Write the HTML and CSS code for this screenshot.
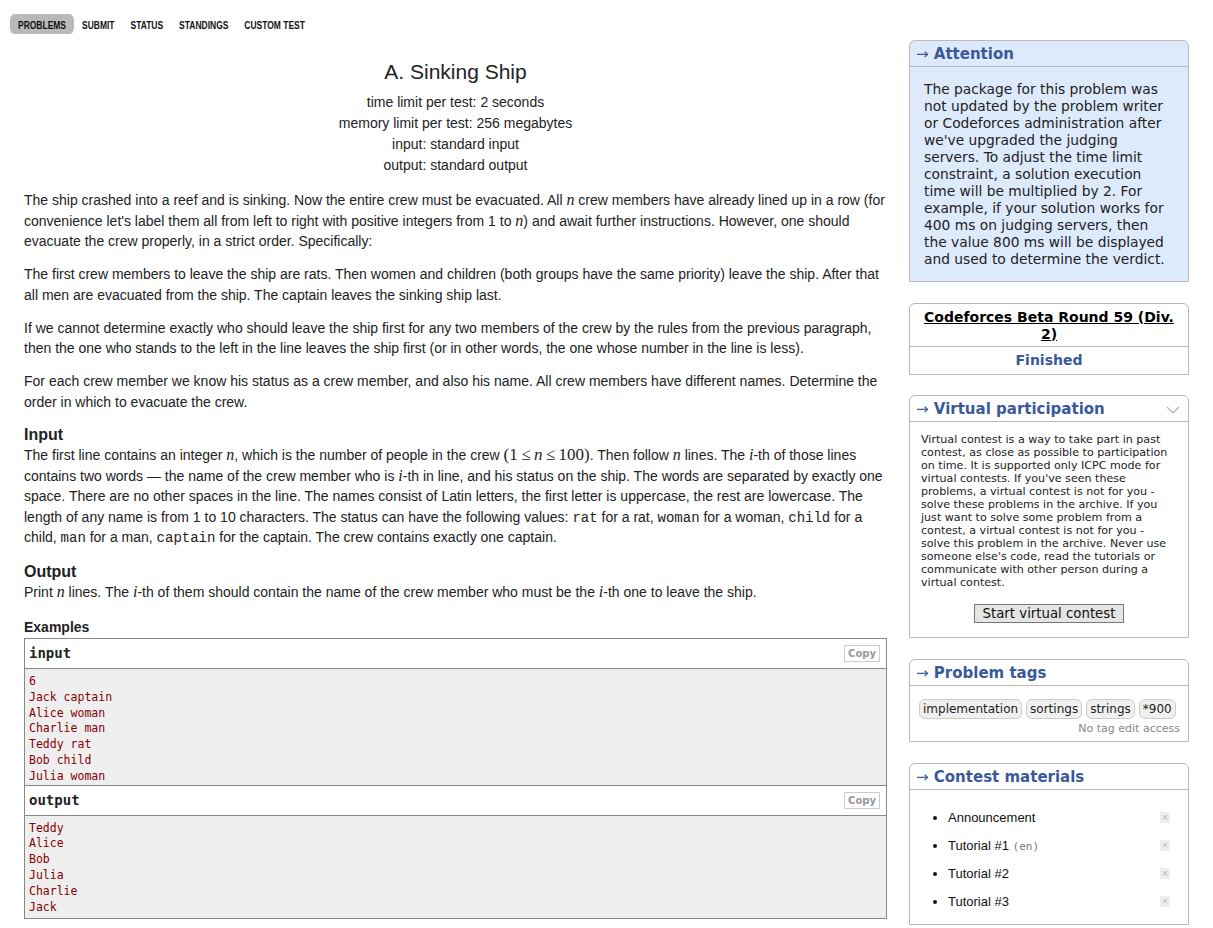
FILE: index.html
```html
<!DOCTYPE html>
<html>
<head>
<meta charset="utf-8">
<link rel="stylesheet" href="styles.css">
</head>
<body>
<div class="page">
  <div class="left">
    <nav class="menu">
      <a class="menu-item active">PROBLEMS</a>
      <a class="menu-item">SUBMIT</a>
      <a class="menu-item">STATUS</a>
      <a class="menu-item">STANDINGS</a>
      <a class="menu-item">CUSTOM TEST</a>
    </nav>
    <div class="problem">
      <div class="header">
        <div class="title">A. Sinking Ship</div>
        <div class="hline">time limit per test: 2 seconds</div>
        <div class="hline">memory limit per test: 256 megabytes</div>
        <div class="hline">input: standard input</div>
        <div class="hline">output: standard output</div>
      </div>
      <p>The ship crashed into a reef and is sinking. Now the entire crew must be evacuated. All <span class="m">n</span> crew members have already lined up in a row (for convenience let's label them all from left to right with positive integers from 1 to <span class="m">n</span>) and await further instructions. However, one should evacuate the crew properly, in a strict order. Specifically:</p>
      <p>The first crew members to leave the ship are rats. Then women and children (both groups have the same priority) leave the ship. After that all men are evacuated from the ship. The captain leaves the sinking ship last.</p>
      <p>If we cannot determine exactly who should leave the ship first for any two members of the crew by the rules from the previous paragraph, then the one who stands to the left in the line leaves the ship first (or in other words, the one whose number in the line is less).</p>
      <p>For each crew member we know his status as a crew member, and also his name. All crew members have different names. Determine the order in which to evacuate the crew.</p>
      <div class="section input-spec">
        <div class="section-title">Input</div>
        <p class="first">The first line contains an integer <span class="m">n</span>, which is the number of people in the crew <span class="mr">(1&thinsp;≤&thinsp;<i>n</i>&thinsp;≤&thinsp;100)</span>. Then follow <span class="m">n</span> lines. The <span class="m">i</span>-th of those lines contains two words — the name of the crew member who is <span class="m">i</span>-th in line, and his status on the ship. The words are separated by exactly one space. There are no other spaces in the line. The names consist of Latin letters, the first letter is uppercase, the rest are lowercase. The length of any name is from 1 to 10 characters. The status can have the following values: <code>rat</code> for a rat, <code>woman</code> for a woman, <code>child</code> for a child, <code>man</code> for a man, <code>captain</code> for the captain. The crew contains exactly one captain.</p>
      </div>
      <div class="section">
        <div class="section-title">Output</div>
        <p class="first">Print <span class="m">n</span> lines. The <span class="m">i</span>-th of them should contain the name of the crew member who must be the <span class="m">i</span>-th one to leave the ship.</p>
      </div>
      <div class="examples">
        <div class="ex-title">Examples</div>
        <div class="sample">
          <div class="io-head"><span>input</span><span class="copy">Copy</span></div>
          <pre class="io-body">6
Jack captain
Alice woman
Charlie man
Teddy rat
Bob child
Julia woman</pre>
          <div class="io-head"><span>output</span><span class="copy">Copy</span></div>
          <pre class="io-body">Teddy
Alice
Bob
Julia
Charlie
Jack</pre>
        </div>
      </div>
    </div>
  </div>

  <aside class="sidebar">
    <div class="box attention">
      <div class="box-title"><span class="arrow">→</span> Attention</div>
      <div class="attention-text">The package for this problem was not updated by the problem writer or Codeforces administration after we've upgraded the judging servers. To adjust the time limit constraint, a solution execution time will be multiplied by 2. For example, if your solution works for 400 ms on judging servers, then the value 800 ms will be displayed and used to determine the verdict.</div>
    </div>

    <div class="box contest">
      <div class="contest-name"><a>Codeforces Beta Round 59 (Div. 2)</a></div>
      <div class="contest-phase">Finished</div>
    </div>

    <div class="box virtual">
      <div class="box-title with-toggle"><span><span class="arrow">→</span> Virtual participation</span>
        <svg class="chev" width="14" height="8" viewBox="0 0 14 8"><path d="M1 1 L7 7 L13 1" fill="none" stroke="#aab0bb" stroke-width="1.2"/></svg>
      </div>
      <div class="virtual-text">Virtual contest is a way to take part in past contest, as close as possible to participation on time. It is supported only ICPC mode for virtual contests. If you've seen these problems, a virtual contest is not for you - solve these problems in the archive. If you just want to solve some problem from a contest, a virtual contest is not for you - solve this problem in the archive. Never use someone else's code, read the tutorials or communicate with other person during a virtual contest.</div>
      <div class="btn-row"><button class="vbtn">Start virtual contest</button></div>
    </div>

    <div class="box">
      <div class="box-title"><span class="arrow">→</span> Problem tags</div>
      <div class="tags">
        <span class="tag">implementation</span>
        <span class="tag">sortings</span>
        <span class="tag">strings</span>
        <span class="tag">*900</span>
      </div>
      <div class="no-edit">No tag edit access</div>
    </div>

    <div class="box">
      <div class="box-title"><span class="arrow">→</span> Contest materials</div>
      <ul class="materials">
        <li><span>Announcement</span><span class="x">×</span></li>
        <li><span>Tutorial #1 <span class="lang">(en)</span></span><span class="x">×</span></li>
        <li><span>Tutorial #2</span><span class="x">×</span></li>
        <li><span>Tutorial #3</span><span class="x">×</span></li>
      </ul>
    </div>
  </aside>
</div>
</body>
</html>
```

FILE: styles.css
```css
html, body {
  margin: 0;
  padding: 0;
  background: #fff;
}
body {
  font-family: "Liberation Sans", Arial, sans-serif;
  color: #222;
}
.page {
  display: flex;
  align-items: flex-start;
  width: 1213px;
}
.left {
  width: 887px;
}
.menu {
  display: flex;
  margin: 14px 0 0 10px;
  height: 20px;
  transform: scaleX(0.77);
  transform-origin: left center;
}
.menu-item {
  font-family: "Liberation Sans", Arial, sans-serif;
  font-weight: bold;
  font-size: 11px;
  line-height: 18px;
  padding: 2px 10.4px 0;
  color: #111;
  border-radius: 6px;
}
.menu-item.active {
  background: #b9b9b9;
}
.problem {
  margin-left: 24px;
  width: 863px;
  font-size: 14px;
  line-height: 20.5px;
}
.header {
  text-align: center;
  margin-top: 24px;
  margin-bottom: 14px;
}
.title {
  font-size: 21px;
  line-height: 28px;
  margin-bottom: 6px;
}
.hline {
  line-height: 21px;
}
p {
  margin: 0 0 12.5px 0;
}
.m {
  font-family: "Liberation Serif", serif;
  font-style: italic;
  font-size: 16px;
  line-height: 1;
}
.mr {
  font-family: "Liberation Serif", serif;
  font-size: 17px;
  line-height: 1;
}
code {
  font-family: "Liberation Mono", monospace;
  font-size: 14px;
  line-height: 1;
}
.section {
  margin-top: 14px;
}
.section.input-spec {
  margin-top: 13px;
}
.section-title {
  font-weight: bold;
  font-size: 16px;
  line-height: 20px;
}
.section p.first {
  margin-bottom: 8px;
}
.examples {
  margin-top: 16px;
}
.ex-title {
  font-weight: bold;
  font-size: 14px;
  line-height: 18px;
  margin-bottom: 2px;
}
.sample {
  border: 1px solid #888;
}
.io-head {
  display: flex;
  justify-content: space-between;
  align-items: center;
  height: 29px;
  padding: 0 6px 0 4px;
  font-family: "DejaVu Sans Mono", monospace;
  font-weight: bold;
  font-size: 14px;
  color: #222;
  border-bottom: 1px solid #888;
  background: #fff;
}
.io-body + .io-head {
  border-top: 1px solid #888;
}
.copy {
  font-family: "DejaVu Sans", sans-serif;
  font-weight: bold;
  font-size: 10px;
  color: #999;
  border: 1px solid #ccc;
  padding: 1px 3px;
  line-height: 13px;
}
.io-body {
  margin: 0;
  background: #efefef;
  font-family: "DejaVu Sans Mono", monospace;
  font-size: 11.5px;
  line-height: 15.8px;
  color: #800;
  padding: 5px 4px 0 4px;
}
.io-body:last-child {
  padding-bottom: 3px;
}

/* Sidebar */
.sidebar {
  width: 280px;
  margin-left: 22px;
  margin-top: 40px;
  display: flex;
  flex-direction: column;
  gap: 21px;
  font-family: "DejaVu Sans", Verdana, sans-serif;
}
.box {
  border: 1px solid #b9b9b9;
  border-radius: 6px 6px 0 0;
  background: #fff;
}
.box-title {
  font-weight: bold;
  font-size: 15px;
  line-height: 23px;
  padding: 2px 6px 0;
  color: #3b5998;
  border-bottom: 1px solid #b9b9b9;
}
.arrow {
  font-weight: normal;
  color: #3b5998;
}
.with-toggle {
  display: flex;
  justify-content: space-between;
  align-items: center;
}
.chev {
  margin-right: 2px;
}
.attention {
  background: #ddeafb;
}
.attention-text {
  font-size: 13.8px;
  line-height: 17px;
  color: #222;
  padding: 14px 16px 13px 14px;
}
.contest-name {
  text-align: center;
  font-weight: bold;
  font-size: 14px;
  line-height: 16.5px;
  padding: 5px 10px 4px;
  border-bottom: 1px solid #b9b9b9;
}
.contest-name a {
  color: #000;
  text-decoration: underline;
}
.contest-phase {
  text-align: center;
  font-weight: bold;
  font-size: 14px;
  line-height: 27px;
  color: #3b5998;
}
.virtual {
  margin-top: -1px;
}
.virtual-text {
  font-size: 11.1px;
  line-height: 13px;
  color: #222;
  padding: 11px 17px 8px 11px;
}
.btn-row {
  text-align: center;
  padding: 6px 0 14px;
}
.vbtn {
  font-family: "DejaVu Sans", Verdana, sans-serif;
  font-size: 13.3px;
  line-height: 15px;
  padding: 1px 8px;
  background: #e5e5e5;
  border: 1px solid #777;
  border-radius: 0;
  color: #111;
}
.tags {
  display: flex;
  flex-wrap: wrap;
  gap: 4px;
  padding: 13px 10px 0 9px;
}
.tag {
  font-size: 12px;
  line-height: 18px;
  padding: 0 3px;
  background: #f0f0f0;
  border: 1px solid #ccc;
  border-radius: 6px;
  color: #222;
}
.no-edit {
  text-align: right;
  font-size: 11px;
  color: #888;
  padding: 3px 8px 6px;
}
.materials {
  margin: 0;
  padding: 14px 18px 9px 38px;
  font-family: "Liberation Sans", Arial, sans-serif;
  font-size: 13px;
  line-height: 27.5px;
  color: #111;
}
.materials li > span:first-child {
  display: inline-block;
  width: 200px;
}
.lang {
  font-family: "DejaVu Sans Mono", monospace;
  font-size: 11px;
  color: #777;
}
.x {
  float: right;
  font-size: 11px;
  color: #bbb;
  background: #eee;
  width: 10px;
  height: 11px;
  line-height: 11px;
  text-align: center;
  margin-top: 8px;
}
```
